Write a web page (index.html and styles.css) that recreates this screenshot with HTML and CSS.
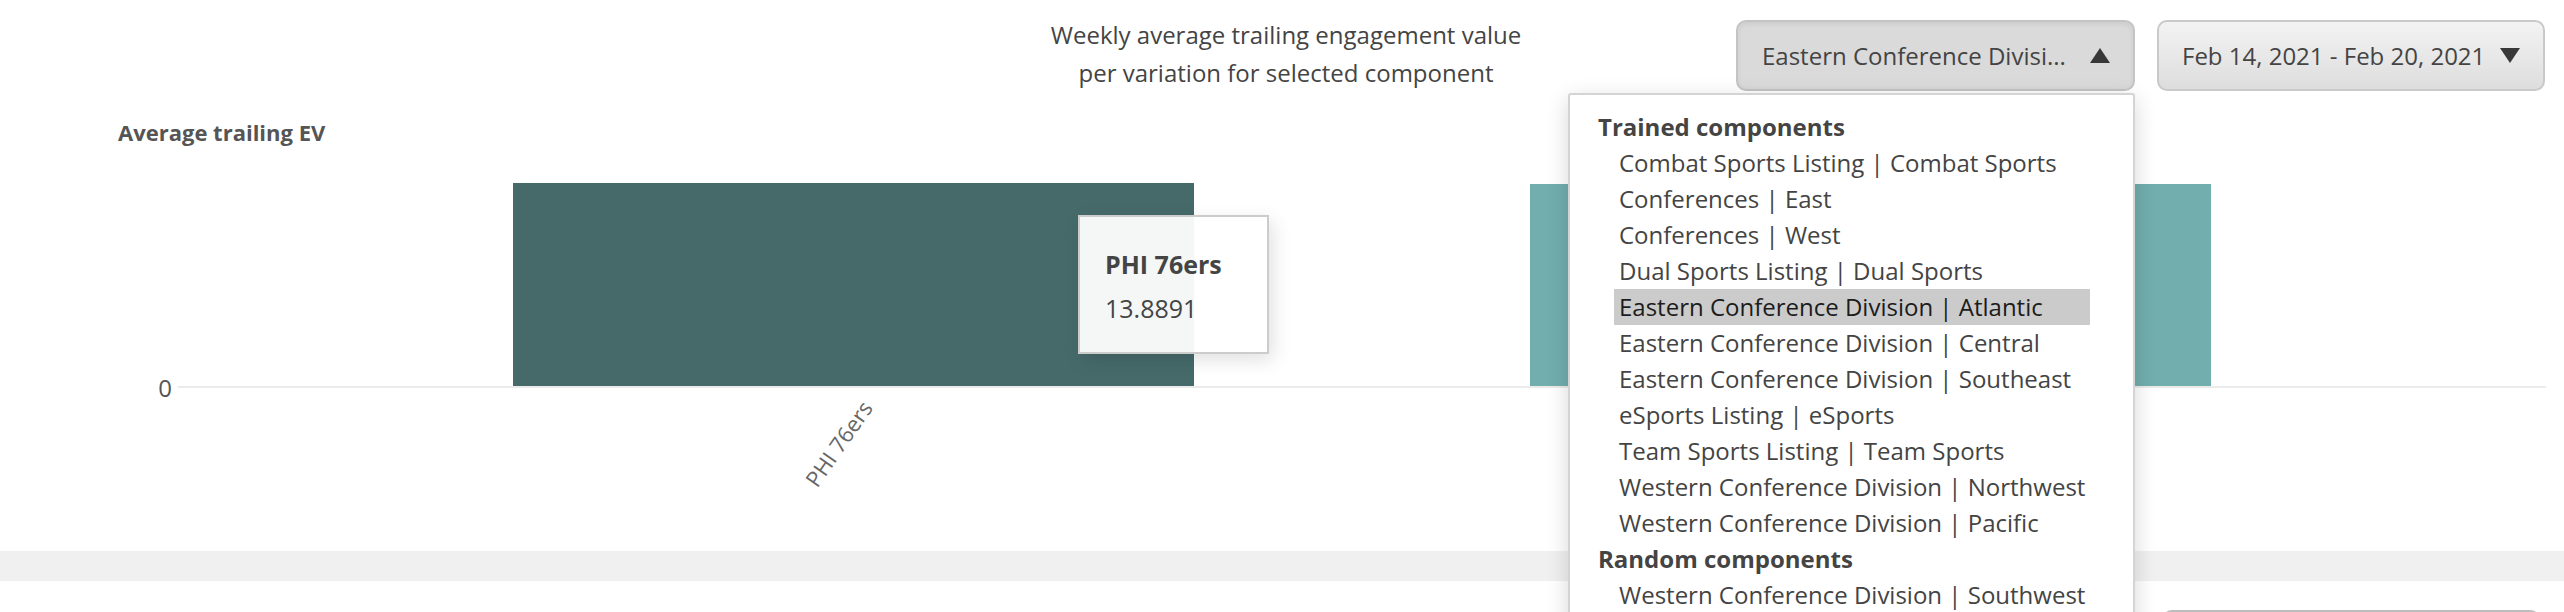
FILE: index.html
```html
<!DOCTYPE html>
<html lang="en">
<head>
<meta charset="utf-8">
<title>Trailing engagement value</title>
<link rel="stylesheet" href="styles.css">
</head>
<body>
<div class="page">
  <header class="toolbar">
    <div class="toolbar-side"></div>
    <p class="subtitle">Weekly average trailing engagement value<br>per variation for selected component</p>
    <div class="controls">
      <div class="select">
        <button class="btn btn-open" type="button">
          <span class="btn-text">Eastern Conference Divisi...</span>
          <svg class="caret" width="20" height="15" viewBox="0 0 20 15"><path d="M10 0 L20 15 L0 15 Z"/></svg>
        </button>
        <div class="menu">
          <p class="menu-group">Trained components</p>
          <ul class="menu-list">
            <li class="menu-item">Combat Sports Listing | Combat Sports</li>
            <li class="menu-item">Conferences | East</li>
            <li class="menu-item">Conferences | West</li>
            <li class="menu-item">Dual Sports Listing | Dual Sports</li>
            <li class="menu-item is-active">Eastern Conference Division | Atlantic</li>
            <li class="menu-item">Eastern Conference Division | Central</li>
            <li class="menu-item">Eastern Conference Division | Southeast</li>
            <li class="menu-item">eSports Listing | eSports</li>
            <li class="menu-item">Team Sports Listing | Team Sports</li>
            <li class="menu-item">Western Conference Division | Northwest</li>
            <li class="menu-item">Western Conference Division | Pacific</li>
          </ul>
          <p class="menu-group">Random components</p>
          <ul class="menu-list">
            <li class="menu-item">Western Conference Division | Southwest</li>
          </ul>
        </div>
      </div>
      <button class="btn btn-date" type="button">
        <span class="btn-text">Feb 14, 2021 - Feb 20, 2021</span>
        <svg class="caret" width="20" height="15" viewBox="0 0 20 15"><path d="M0 0 L20 0 L10 15 Z"/></svg>
      </button>
    </div>
  </header>

  <section class="chart">
    <div class="chart-title">Average trailing EV</div>
    <div class="plot-row">
      <div class="y-axis"><span class="y-tick">0</span></div>
      <div class="plot">
        <div class="bar bar-dark" style="height:203px"></div>
        <div class="bar bar-light" style="height:202px"></div>
        <div class="tooltip">
          <div class="tooltip-label">PHI 76ers</div>
          <div class="tooltip-value">13.8891</div>
        </div>
      </div>
    </div>
    <div class="x-axis">
      <div class="x-spacer"></div>
      <div class="x-ticks">
        <div class="x-slot"><span class="x-anchor"><span class="x-label">PHI 76ers</span></span></div>
        <div class="x-slot"><span class="x-anchor"><span class="x-label">BOS Celtics</span></span></div>
      </div>
    </div>
  </section>

  <div class="divider"></div>

  <section class="next-row">
    <div class="btn btn-ghost"></div>
  </section>
</div>
</body>
</html>
```

FILE: styles.css
```css
* {
  box-sizing: border-box;
}

html,
body {
  margin: 0;
  padding: 0;
}

body {
  width: 2564px;
  height: 612px;
  overflow: hidden;
  background: #fff;
  font-family: "Open Sans", "Liberation Sans", sans-serif;
  color: #444;
}

/* ---------- toolbar ---------- */

.toolbar {
  display: grid;
  grid-template-columns: 1fr auto 1fr;
  align-items: start;
  padding: 20px 19px 0 19px;
}

.subtitle {
  margin: -4px 0 0 8px;
  font-size: 24px;
  line-height: 38px;
  text-align: center;
  color: #444;
}

.controls {
  justify-self: end;
  display: flex;
  gap: 22px;
}

.select {
  position: relative;
}

.btn {
  display: flex;
  align-items: center;
  justify-content: space-between;
  height: 71px;
  margin: 0;
  padding: 0 23px 0 24px;
  border: 2px solid #c9c9c9;
  border-radius: 10px;
  background: linear-gradient(#f3f3f3, #dddddd);
  font-family: "Open Sans", "Liberation Sans", sans-serif;
  font-size: 24px;
  color: #444;
}

.btn-open {
  width: 399px;
  background: #dadada;
  border-color: #c4c4c4;
  box-shadow: inset 0 2px 5px rgba(0, 0, 0, 0.07);
}

.btn-date {
  width: 388px;
  padding-left: 23px;
}

.btn-text {
  white-space: nowrap;
}

.caret {
  display: block;
  fill: #383838;
}

/* ---------- dropdown menu ---------- */

.menu {
  position: absolute;
  top: calc(100% + 2px);
  right: 0;
  width: 567px;
  padding: 14px 43px 24px 0;
  background: #fff;
  border: 2px solid #d4d4d4;
  border-radius: 3px;
  box-shadow: 0 6px 22px rgba(0, 0, 0, 0.16);
  z-index: 5;
}

.menu-group {
  margin: 0;
  padding-left: 28px;
  font-size: 24px;
  font-weight: 700;
  line-height: 36px;
  color: #444;
}

.menu-list {
  list-style: none;
  margin: 0;
  padding: 0 0 0 44px;
}

.menu-item {
  padding-left: 5px;
  font-size: 24px;
  line-height: 36px;
  white-space: nowrap;
  color: #444;
}

.menu-item.is-active {
  background: #cbcbcb;
  color: #1c1c1c;
}

/* ---------- chart ---------- */

.chart {
  padding-top: 25px;
}

.chart-title {
  margin-left: 118px;
  font-size: 22px;
  font-weight: 700;
  line-height: 30px;
  color: #555;
}

.plot-row {
  display: flex;
  height: 241px;
  margin-right: 18px;
}

.y-axis {
  width: 178px;
  padding-right: 6px;
  display: flex;
  flex-direction: column;
  justify-content: flex-end;
  align-items: flex-end;
}

.y-tick {
  font-size: 24px;
  line-height: 26px;
  margin-bottom: -13px;
  color: #555;
}

.plot {
  position: relative;
  flex: 1;
  display: flex;
  justify-content: space-evenly;
  align-items: flex-end;
  border-bottom: 2px solid #ebebeb;
}

.bar {
  width: 681px;
}

.bar-dark {
  background: #466a6a;
}

.bar-light {
  background: #72aeae;
}

.tooltip {
  position: absolute;
  left: 900px;
  top: 68px;
  width: 191px;
  height: 139px;
  padding: 25px 0 0 25px;
  background: rgba(255, 255, 255, 0.95);
  border: 2px solid #cccccc;
  box-shadow: 4px 6px 18px rgba(0, 0, 0, 0.12);
  font-size: 25px;
  line-height: 44px;
  color: #444;
}

.tooltip-label {
  font-weight: 700;
}

.x-axis {
  display: flex;
  height: 163px;
  margin-right: 18px;
}

.x-spacer {
  width: 178px;
  flex-shrink: 0;
}

.x-ticks {
  flex: 1;
  display: flex;
  justify-content: space-evenly;
}

.x-slot {
  width: 681px;
  display: flex;
  justify-content: center;
  padding-left: 25px;
}

.x-anchor {
  width: 0;
  height: 30px;
  display: flex;
  justify-content: flex-end;
}

.x-label {
  flex-shrink: 0;
  white-space: nowrap;
  font-size: 22px;
  line-height: 30px;
  color: #666;
  transform-origin: right center;
  transform: rotate(-55deg);
}

/* ---------- lower section ---------- */

.divider {
  height: 30px;
  background: #f0f0f0;
}

.next-row {
  display: flex;
  justify-content: flex-end;
  padding: 29px 24px 0 0;
}

.btn-ghost {
  width: 378px;
  border-color: #bdbdbd;
}
```
